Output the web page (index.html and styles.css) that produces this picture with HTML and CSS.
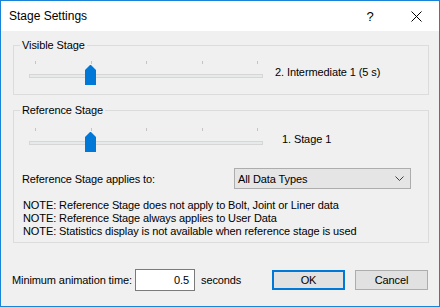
FILE: index.html
```html
<!DOCTYPE html>
<html lang="en">
<head>
    <meta charset="UTF-8">
    <title>Stage Settings</title>
    <link rel="stylesheet" href="styles.css">
</head>
<body>
    <div class="window">
        <div class="titlebar">
            <span class="title">Stage Settings</span>
            <span class="caption-btn help">?</span>
            <span class="caption-btn close">
                <svg width="11" height="11" viewBox="0 0 11 11">
                    <path d="M0.5 0.5 L10.5 10.5 M10.5 0.5 L0.5 10.5" stroke="#000" stroke-width="1" fill="none"/>
                </svg>
            </span>
        </div>

        <div class="content">
            <fieldset class="group group-visible">
                <legend>Visible Stage</legend>
                <div class="stage-row">
                    <div class="slider">
                        <div class="ticks">
                            <span></span><span></span><span></span><span></span><span></span>
                        </div>
                        <div class="track"></div>
                        <div class="thumb" style="left: 56px;"></div>
                    </div>
                    <span class="stage-value">2. Intermediate 1 (5 s)</span>
                </div>
            </fieldset>

            <fieldset class="group group-reference">
                <legend>Reference Stage</legend>
                <div class="stage-row">
                    <div class="slider">
                        <div class="ticks">
                            <span></span><span></span><span></span><span></span><span></span>
                        </div>
                        <div class="track"></div>
                        <div class="thumb" style="left: 56px;"></div>
                    </div>
                    <span class="stage-value ref">1. Stage 1</span>
                </div>

                <div class="applies-row">
                    <label class="applies-label">Reference Stage applies to:</label>
                    <div class="combo">
                        <span>All Data Types</span>
                        <svg width="9" height="5" viewBox="0 0 9 5">
                            <path d="M0.5 0.5 L4.5 4.5 L8.5 0.5" stroke="#404040" stroke-width="1" fill="none"/>
                        </svg>
                    </div>
                </div>

                <div class="notes">
                    <div>NOTE: Reference Stage does not apply to Bolt, Joint or Liner data</div>
                    <div>NOTE: Reference Stage always applies to User Data</div>
                    <div>NOTE: Statistics display is not available when reference stage is used</div>
                </div>
            </fieldset>

            <div class="bottom-row">
                <label class="anim-label">Minimum animation time:</label>
                <div class="edit">0.5</div>
                <span class="unit">seconds</span>
                <button class="btn btn-default">OK</button>
                <button class="btn">Cancel</button>
            </div>
        </div>
    </div>
</body>
</html>
```

FILE: styles.css
```css
body {
    margin: 0;
    font-family: "Liberation Sans", Arial, sans-serif;
    font-size: 11px;
    letter-spacing: -0.1px;
    color: #000;
}

.window {
    width: 440px;
    height: 307px;
    box-sizing: border-box;
    border: 1px solid #1883d7;
    background-color: #f0f0f0;
    display: flex;
    flex-direction: column;
}

.titlebar {
    height: 30px;
    background-color: #fff;
    display: flex;
    align-items: center;
    padding-left: 8px;
}

.title {
    font-size: 12px;
    letter-spacing: 0;
    flex: 1;
}

.caption-btn {
    width: 46px;
    height: 30px;
    display: flex;
    align-items: center;
    justify-content: center;
}

.help {
    font-size: 13px;
}

.content {
    flex: 1;
}

.group {
    margin: 0 0 0 12px;
    width: 416px;
    box-sizing: border-box;
    border: 1px solid #dcdcdc;
    padding: 0 6px;
}

.group legend {
    padding: 0 2px;
    line-height: 14px;
}

.group-visible {
    margin-top: 7px;
    padding-top: 9px;
    padding-bottom: 9px;
}

.group-reference {
    margin-top: 8px;
    padding-top: 11px;
    padding-bottom: 4px;
}

.stage-row {
    display: flex;
    align-items: center;
    margin-left: 9px;
}

.slider {
    position: relative;
    width: 234px;
    height: 24px;
}

.ticks {
    display: flex;
    justify-content: space-between;
    padding: 0 5px 0 6px;
    height: 3px;
}

.ticks span {
    width: 1px;
    height: 3px;
    background-color: #c4c4c4;
}

.track {
    margin-top: 10px;
    height: 2px;
    border: 1px solid #d6d6d6;
    background-color: #e7eaea;
}

.thumb {
    position: absolute;
    top: 4px;
    width: 11px;
    height: 20px;
    background-color: #0078d7;
    clip-path: polygon(0 5px, 4px 1px, 5px 0, 6px 0, 7px 1px, 11px 5px, 11px 20px, 0 20px);
}

.stage-value {
    margin-left: 12px;
    margin-top: -2px;
}

.stage-value.ref {
    margin-left: 19px;
}

.applies-row {
    display: flex;
    align-items: center;
    margin-top: 16px;
}

.applies-label {
    width: 212px;
    margin-left: 2px;
}

.combo {
    width: 177px;
    height: 21px;
    box-sizing: border-box;
    border: 1px solid #adadad;
    background-color: #e5e5e5;
    display: flex;
    align-items: center;
    justify-content: space-between;
    padding: 0 6px 0 3px;
}

.notes {
    margin: 10px 0 0 3px;
    line-height: 13px;
}

.bottom-row {
    display: flex;
    align-items: center;
    margin-top: 26px;
    padding: 0 11px;
}

.anim-label {
    width: 123px;
}

.edit {
    width: 60px;
    height: 22px;
    box-sizing: border-box;
    border: 1px solid #7a7a7a;
    background-color: #fff;
    text-align: right;
    line-height: 20px;
    padding-right: 5px;
}

.unit {
    margin-left: 6px;
}

.btn {
    width: 73px;
    height: 20px;
    box-sizing: border-box;
    border: 1px solid #adadad;
    background-color: #e1e1e1;
    font-family: inherit;
    font-size: 11px;
    letter-spacing: inherit;
    color: #000;
    padding: 0;
    margin-left: 10px;
}

.btn-default {
    margin-left: auto;
    border: 2px solid #0078d7;
}
```
